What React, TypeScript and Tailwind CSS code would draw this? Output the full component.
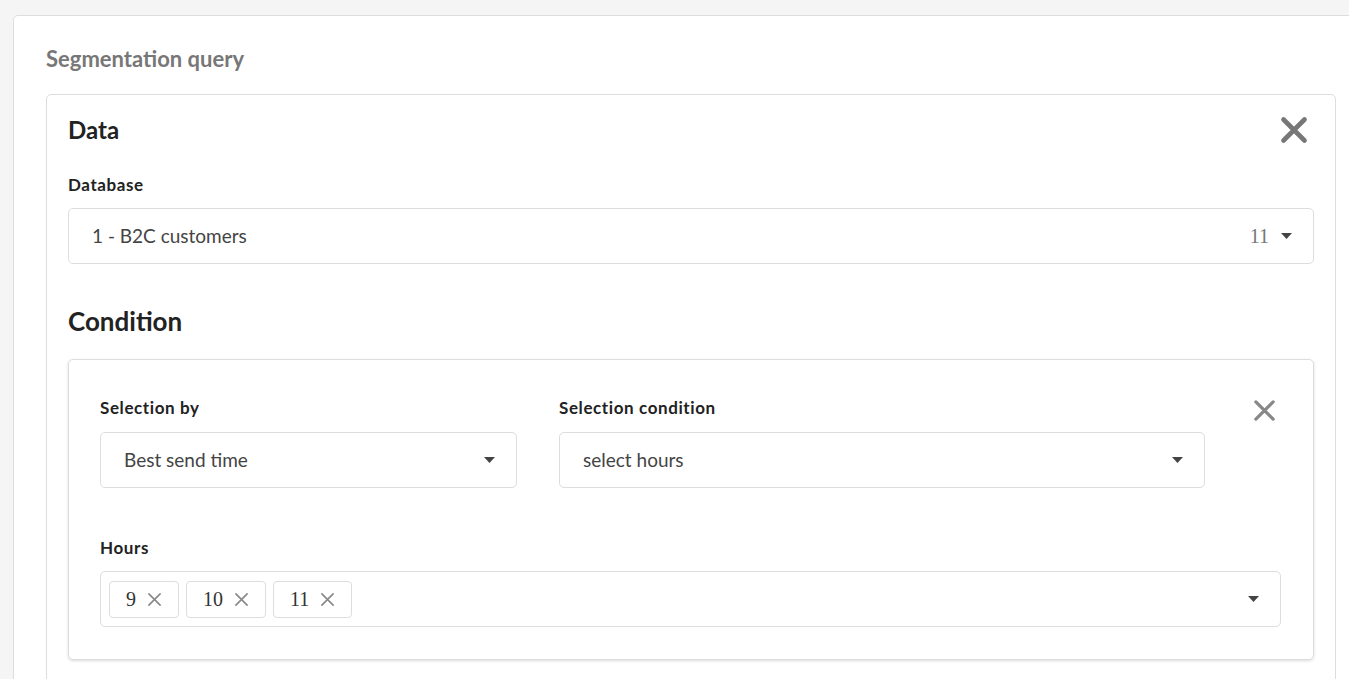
import React from 'react';

const font = { fontFamily: 'Lato, "Noto Sans", sans-serif' };
const serif = { fontFamily: '"Liberation Serif", serif' };

const Caret = () => (
  <svg width="11" height="6" viewBox="0 0 11 6" className="shrink-0">
    <path d="M0 0 H11 L5.5 6 Z" fill="#444" />
  </svg>
);

const CloseIcon = ({ size, stroke, color }: { size: number; stroke: number; color: string }) => (
  <svg width={size} height={size} viewBox="0 0 24 24">
    <path
      d="M3 3 L21 21 M21 3 L3 21"
      stroke={color}
      strokeWidth={stroke}
      strokeLinecap="round"
      fill="none"
    />
  </svg>
);

const Label = ({ children }: { children: React.ReactNode }) => (
  <div className="text-[17px] leading-[20px] font-bold tracking-[0.6px] text-[#222]">{children}</div>
);

const Select = ({ value, count }: { value?: string; count?: string }) => (
  <div className="h-[56px] flex items-center border border-[#ddd] rounded-[5px] bg-white pl-[23px] pr-[21px]">
    <span className="flex-1 text-[19px] text-[#444]">{value}</span>
    {count && (
      <span className="text-[20px] text-[#777] mr-[12px]" style={serif}>
        {count}
      </span>
    )}
    <Caret />
  </div>
);

const Tag = ({ label }: { label: string }) => (
  <div className="h-[37px] flex items-center gap-[11px] pl-[16px] pr-[16px] border border-[#ddd] rounded-[4px]">
    <span className="text-[20px] text-[#333]" style={serif}>
      {label}
    </span>
    <CloseIcon size={15} stroke={2.6} color="#888" />
  </div>
);

export default function App() {
  return (
    <div className="h-screen w-screen overflow-hidden bg-[#f5f5f5]" style={font}>
      <div className="ml-[13px] mt-[15px] w-[1360px] bg-white border border-[#ddd] rounded-[5px] pl-[32px] pt-[31px] pb-10">
        <h2 className="text-[22px] leading-[24px] font-bold text-[#777] mb-[23px]">Segmentation query</h2>

        <div className="w-[1290px] border border-[#ddd] rounded-[5px] px-[21px] pt-[20px] pb-8">
          <div className="flex items-center justify-between h-[30px]">
            <h3 className="text-[24px] leading-[30px] font-bold text-[#222]">Data</h3>
            <div className="mr-[6px]">
              <CloseIcon size={28} stroke={4} color="#777" />
            </div>
          </div>

          <div className="mt-[30px]">
            <Label>Database</Label>
            <div className="mt-[13px]">
              <Select value="1 - B2C customers" count="11" />
            </div>
          </div>

          <h3 className="mt-[42px] text-[26px] leading-[30px] font-bold text-[#222]">Condition</h3>

          <div className="mt-[23px] border border-[#ddd] rounded-[5px] shadow-[0_1px_3px_rgba(0,0,0,0.15)] pl-[31px] pr-[32px] pt-[38px] pb-[32px]">
            <div className="grid grid-cols-[417px_646px_1fr] gap-x-[42px]">
              <div>
                <Label>Selection by</Label>
                <div className="mt-[14px]">
                  <Select value="Best send time" />
                </div>
              </div>
              <div>
                <Label>Selection condition</Label>
                <div className="mt-[14px]">
                  <Select value="select hours" />
                </div>
              </div>
              <div className="flex justify-center pt-[1px]">
                <CloseIcon size={23} stroke={3.4} color="#888" />
              </div>
            </div>

            <div className="mt-[50px]">
              <Label>Hours</Label>
              <div className="mt-[13px] h-[56px] flex items-center border border-[#ddd] rounded-[5px] pl-[8px] pr-[21px]">
                <div className="flex-1 flex gap-[7px]">
                  <Tag label="9" />
                  <Tag label="10" />
                  <Tag label="11" />
                </div>
                <Caret />
              </div>
            </div>
          </div>
        </div>
      </div>
    </div>
  );
}
